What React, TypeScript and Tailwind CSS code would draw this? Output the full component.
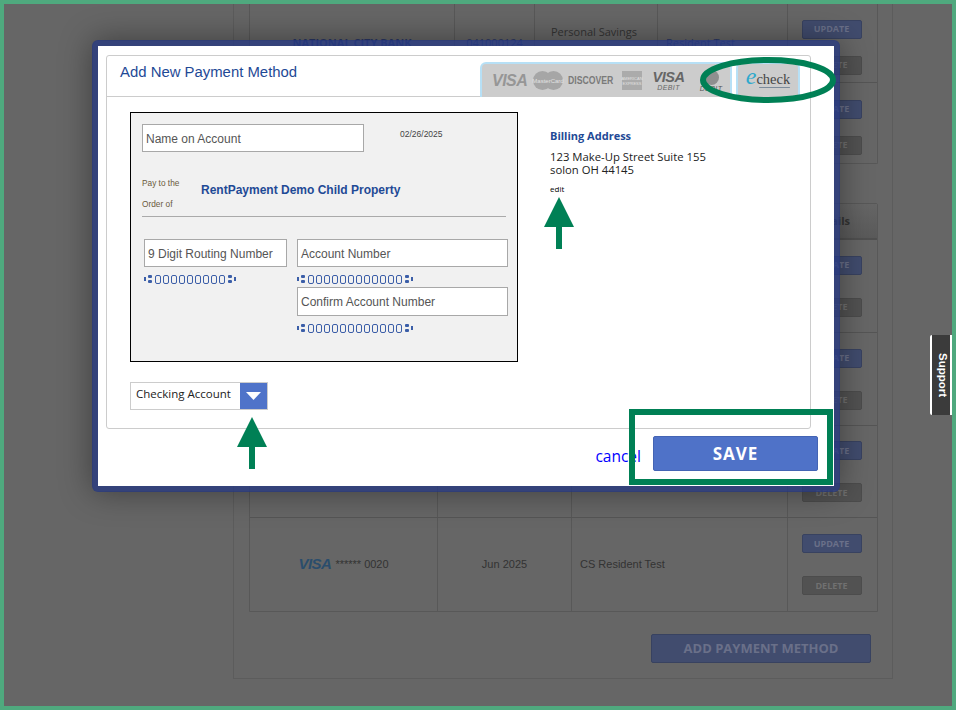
import React from "react";

const sans = "font-['Liberation_Sans',Arial,sans-serif]";
const wide = "font-['Open_Sans',sans-serif]";

function BgButtons({ gap, shift }: { gap: string; shift?: string }) {
  return (
    <div className={`flex h-full flex-col items-center justify-center ${gap} ${shift ?? ""}`}>
      <div className="flex h-[19px] w-[60px] items-center justify-center rounded-[2px] border border-[#384260] bg-[#414c6e] text-[9px] font-bold text-[#6a7089]">UPDATE</div>
      <div className="flex h-[19px] w-[60px] items-center justify-center rounded-[2px] border border-[#4c4c4c] bg-[#525252] text-[9px] font-bold text-[#707070]">DELETE</div>
    </div>
  );
}

function Row({ cols, cells, h, last }: { cols: string; cells: React.ReactNode[]; h: string; last?: boolean }) {
  return (
    <div className={`grid ${cols} ${h} ${last ? "" : "border-b border-[#555]"}`}>
      {cells.map((c, i) => (
        <div key={i} className="flex items-center justify-center border-r border-[#585858] text-[11px] text-[#333] last:border-r-0">{c}</div>
      ))}
    </div>
  );
}

function Dots() {
  return (
    <span className="flex flex-col gap-[1.5px]">
      <span className="h-[3.5px] w-[4px] rounded-[1px] bg-[#3b5ea8]" />
      <span className="h-[3.5px] w-[4px] rounded-[1px] bg-[#3b5ea8]" />
    </span>
  );
}

function Micr({ n }: { n: number }) {
  return (
    <div className="flex h-[10px] items-center">
      <span className="mr-[2px] h-[4px] w-[1.5px] bg-[#3b5ea8]" />
      <Dots />
      <span className="ml-[3px] flex gap-[1.5px]">
        {Array.from({ length: n }).map((_, i) => (
          <span key={i} className="h-[9px] w-[6.5px] rounded-[2px] border-[1.5px] border-[#3b5ea8]" />
        ))}
      </span>
      <span className="w-[3px]" />
      <Dots />
      <span className="ml-[2px] h-[4px] w-[1.5px] bg-[#3b5ea8]" />
    </div>
  );
}

function Field({ text, className }: { text: string; className: string }) {
  return (
    <div className={`flex items-center border-[1.5px] border-[#a8a8a8] bg-white px-[3px] pt-[1px] text-[12px] text-[#555] ${sans} ${className}`}>{text}</div>
  );
}

function Arrow({ className }: { className: string }) {
  return (
    <svg className={className} width="30" height="52" viewBox="0 0 30 52">
      <polygon points="15,0 30,30 0,30" fill="#008055" />
      <rect x="12" y="29" width="6" height="23" fill="#008055" />
    </svg>
  );
}

export default function App() {
  const c1 = "grid-cols-[205px_80px_123px_130px_1fr]";
  const c2 = "grid-cols-[188px_134px_216px_1fr]";
  const g1 = "gap-[17px]";
  const g2 = "gap-[23px]";
  return (
    <div className={`relative h-[710px] w-[956px] overflow-hidden border-4 border-[#4fa97e] bg-[#666] ${wide}`}>
      {/* dimmed page */}
      <div className="ml-[229px] h-[675px] w-[660px] border-x border-b border-[#5c5c5c] pl-[15px]">
        <div className="w-[629px] rounded-b-[2px] border border-t-0 border-[#585858]">
          <Row cols={c1} h="h-[79px]" cells={[
            <span className="text-[11px] font-bold text-[#2a3766]">NATIONAL CITY BANK</span>,
            <span className="text-[#2a3766]">041000124</span>,
            <span className="-mt-[22px] -ml-[4px] text-[#333]">Personal Savings</span>,
            <span className="w-full pl-[8px] text-[#2a3766]">Resident Test</span>,
            <BgButtons gap={g1} shift="pt-[8px] -ml-[2px]" />,
          ]} />
          <Row cols={c1} h="h-[80px]" last cells={["", "", "", "", <BgButtons gap={g1} shift="pt-[8px] -ml-[2px]" />]} />
        </div>
        <div className="mt-[39px] w-[629px] rounded-t-[2px] border border-[#585858]">
          <div className="flex h-[36px] items-center justify-end border-b-2 border-[#505050] bg-gradient-to-b from-[#666] to-[#5a5a5a] pr-[27px] text-[11px] font-bold text-[#333]">Details</div>
          <Row cols={c2} h="h-[93px]" cells={["", "", "", <BgButtons gap={g2} shift="-ml-[2px]" />]} />
          <Row cols={c2} h="h-[93px]" cells={["", "", "", <BgButtons gap={g2} shift="-ml-[2px]" />]} />
          <Row cols={c2} h="h-[92px]" cells={["", "", "", <BgButtons gap={g2} shift="-ml-[2px]" />]} />
          <Row cols={c2} h="h-[93px]" last cells={[
            <span className="flex items-center gap-[4px] text-[#333]"><span className={`text-[15px] font-bold italic tracking-[-0.5px] text-[#2a4d6c] ${sans}`}>VISA</span><span className={`${sans} text-[11px]`}>****** 0020</span></span>,
            <span className={sans}>Jun 2025</span>,
            <span className={`w-full pl-[8px] ${sans}`}>CS Resident Test</span>,
            <BgButtons gap={g2} shift="-ml-[2px]" />,
          ]} />
        </div>
        <div className="mt-[22px] flex w-[622px] justify-end">
          <div className="flex h-[29px] w-[220px] items-center justify-center rounded-[2px] border border-[#384260] bg-[#414c6e] text-[13px] font-bold text-[#6a7089]">ADD PAYMENT METHOD</div>
        </div>
      </div>

      {/* support tab */}
      <div className={`absolute right-0 top-[331px] flex h-[80px] w-[22px] items-center justify-center rounded-l-[2px] border-y-2 border-l-2 border-white bg-[#3b3b3b] pl-[3px] text-[11.5px] font-bold text-white [writing-mode:vertical-rl] ${sans}`}>Support</div>

      {/* modal */}
      <div className="absolute left-[88px] top-[36px] h-[452px] w-[748px] rounded-[6px] border-[6px] border-[rgba(38,56,128,0.78)] bg-white bg-clip-padding pl-[8px] pt-[9px] shadow-[0_0_32px_rgba(0,0,0,0.4)]">
        <div className="h-[374px] w-[705px] rounded-[3px] border border-[#ccc]">
          <div className="flex h-[41px] items-start justify-between border-b border-[#ccc] pl-[13px] pr-[10px]">
            <div className={`mt-[5px] text-[14.9px] text-[#1f4a96] ${sans}`}>Add New Payment Method</div>
            <div className={`mt-[6px] flex h-[35px] gap-[4px] ${sans}`}>
              <div className="flex w-[252px] items-center rounded-t-[6px] border-x-2 border-t-2 border-[#b7e0f6] bg-[#ccc] pl-[10px]">
                <span className="w-[36px] shrink-0 text-[16px] font-bold italic leading-none tracking-[-0.5px] text-[#969696]">VISA</span>
                <span className="relative ml-[5px] flex h-[19px] w-[30px] shrink-0 items-center justify-center">
                  <span className="absolute left-0 top-0 h-[19px] w-[19px] rounded-full bg-[#a6a6a6]" />
                  <span className="absolute right-0 top-0 h-[19px] w-[19px] rounded-full bg-[#a6a6a6]" />
                  <span className="relative text-[6px] leading-none text-[#e2e2e2]">MasterCard</span>
                </span>
                <span className="ml-[5px] w-[46px] shrink-0 origin-left scale-y-[1.25] whitespace-nowrap text-[8.7px] font-bold leading-none text-[#7a7a7a]">DISCOVER</span>
                <span className="ml-[8px] flex h-[19px] w-[20px] shrink-0 flex-col items-center justify-center bg-[#ababab] text-center text-[4px] leading-[5px] text-[#e2e2e2]">AMERICAN<br />EXPRESS</span>
                <span className="ml-[12px] flex w-[29px] shrink-0 flex-col items-center leading-none text-[#666]">
                  <span className="text-[14.5px] font-bold italic tracking-[-0.4px]">VISA</span>
                  <span className="text-[7px] italic tracking-[0.4px]">DEBIT</span>
                </span>
                <span className="ml-[17px] flex w-[22px] shrink-0 flex-col items-center leading-none text-[#555]">
                  <span className="h-[15px] w-[15px] rounded-full bg-[#8f8f8f]" />
                  <span className="text-[7px] italic tracking-[0.4px]">DEBIT</span>
                </span>
              </div>
              <div className="flex w-[64px] flex-col items-center justify-center rounded-t-[6px] border-x-2 border-t-2 border-[#b7e0f6] bg-[#ccc] pb-[5px]">
                <div className="flex items-baseline leading-none">
                  <span className="font-['Liberation_Serif',serif] text-[24px] italic leading-[16px] text-[#2fa9cc]">e</span>
                  <span className="font-['Liberation_Serif',serif] text-[14.5px] leading-[16px] text-[#444]">check</span>
                </div>
                <div className="ml-[12px] h-[1.5px] w-[31px] rounded-[1px] bg-[#7b8b9b]" />
              </div>
            </div>
          </div>
          <div className="flex pl-[23px] pt-[15px]">
            <div>
              <div className="h-[250px] w-[388px] border border-black bg-[#f1f1f1] pl-[11px] pt-[11px]">
                <div className="flex items-start">
                  <Field text="Name on Account" className="h-[28px] w-[222px]" />
                  <span className={`ml-[36px] mt-[4px] text-[8.5px] text-[#444] ${sans}`}>02/26/2025</span>
                </div>
                <div className="flex h-[65px] w-[364px] items-center border-b border-[#aaa]">
                  <div className={`w-[59px] pt-[20px] text-[8.3px] leading-[21px] text-[#6a5a3c] ${sans}`}>Pay to the<br />Order of</div>
                  <div className={`pt-[12px] text-[12px] font-bold text-[#1f4a96] ${sans}`}>RentPayment Demo Child Property</div>
                </div>
                <div className="ml-[2px] mt-[22px] flex items-start gap-[10px]">
                  <div className="w-[143px]">
                    <Field text="9 Digit Routing Number" className="h-[28px] w-[143px]" />
                    <div className="mt-[7px]"><Micr n={9} /></div>
                  </div>
                  <div className="w-[211px]">
                    <Field text="Account Number" className="h-[28px] w-[211px]" />
                    <div className="mt-[7px]"><Micr n={12} /></div>
                    <Field text="Confirm Account Number" className="mt-[3px] h-[29px] w-[211px]" />
                    <div className="mt-[7px]"><Micr n={12} /></div>
                  </div>
                </div>
              </div>
              <div className="mt-[20px] flex h-[28px] w-[138px] border border-[#ccc]">
                <div className="flex flex-1 items-center pb-[5px] pl-[5px] text-[11.5px] text-[#222]">Checking Account</div>
                <div className="flex w-[27px] items-center justify-center bg-[#4f73c9]">
                  <svg width="15" height="8" viewBox="0 0 15 8"><polygon points="0,0 15,0 7.5,8" fill="white" /></svg>
                </div>
              </div>
            </div>
            <div className="ml-[32px] pt-[16px] text-[#222]">
              <div className="text-[11px] font-bold text-[#1f4a96]">Billing Address</div>
              <div className="mt-[5px] text-[11.3px] leading-[13px]">123 Make-Up Street Suite 155<br />solon OH 44145</div>
              <div className="mt-[7px] text-[8px] text-black">edit</div>
            </div>
          </div>
        </div>
        <div className="flex items-center justify-end pr-[16px] pt-[7px]">
          <span className="mr-[12px] mt-[6px] text-[15.5px] text-[#0000ff]">cancel</span>
          <div className="flex h-[35px] w-[165px] items-center justify-center rounded-[2px] border border-[#4464b4] bg-[#4f72c8] text-[17px] font-bold tracking-[1px] text-white">SAVE</div>
        </div>
      </div>

      {/* annotations */}
      <svg className="absolute left-[692px] top-[49px]" width="144" height="54" viewBox="0 0 144 54">
        <ellipse cx="72" cy="27" rx="65" ry="20" fill="none" stroke="#008055" strokeWidth="6" />
      </svg>
      <Arrow className="absolute left-[540px] top-[193px]" />
      <Arrow className="absolute left-[233px] top-[413px]" />
      <div className="absolute left-[625px] top-[405px] h-[76px] w-[204px] border-[6px] border-[#008055]" />
    </div>
  );
}
